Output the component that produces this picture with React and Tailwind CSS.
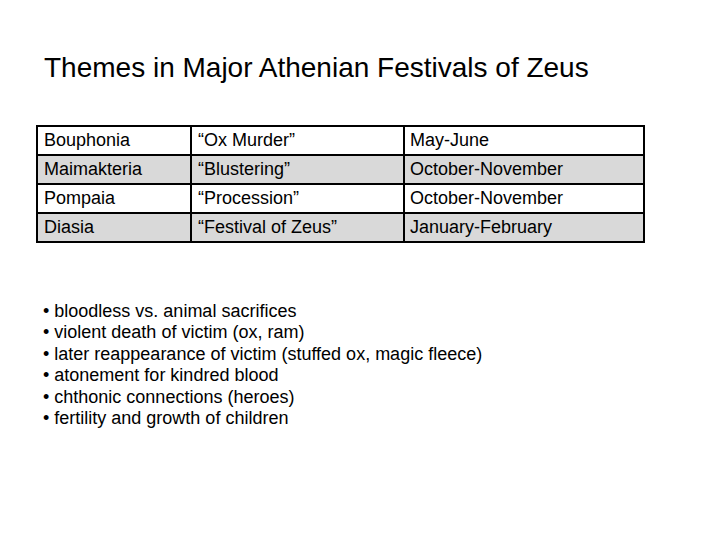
const rows = [
  ["Bouphonia", "\u201cOx Murder\u201d", "May-June"],
  ["Maimakteria", "\u201cBlustering\u201d", "October-November"],
  ["Pompaia", "\u201cProcession\u201d", "October-November"],
  ["Diasia", "\u201cFestival of Zeus\u201d", "January-February"],
];

const themes = [
  "bloodless vs. animal sacrifices",
  "violent death of victim (ox, ram)",
  "later reappearance of victim (stuffed ox, magic fleece)",
  "atonement for kindred blood",
  "chthonic connections (heroes)",
  "fertility and growth of children",
];

export default function App() {
  return (
    <div className="w-[720px] h-[540px] bg-white text-black font-['Liberation_Sans',Arial,sans-serif] overflow-hidden">
      <h1 className="pt-[52px] pl-[44px] text-[28px] leading-[32px]">
        Themes in Major Athenian Festivals of Zeus
      </h1>

      <table className="mt-[41px] ml-[36px] border-collapse text-[18px] leading-[21px]">
        <tbody>
          {rows.map((r, i) => (
            <tr key={i} className={i % 2 ? "bg-[#d9d9d9]" : "bg-white"}>
              <td className="w-[154px] h-[29px] border-2 border-black px-[6px] py-0">{r[0]}</td>
              <td className="w-[213px] h-[29px] border-2 border-black px-[6px] py-0">{r[1]}</td>
              <td className="w-[240px] h-[29px] border-2 border-black px-[5px] py-0">{r[2]}</td>
            </tr>
          ))}
        </tbody>
      </table>

      <ul className="mt-[58px] ml-[43px] text-[18px] leading-[21.4px]">
        {themes.map((t) => (
          <li key={t}>{"\u2022 " + t}</li>
        ))}
      </ul>
    </div>
  );
}
